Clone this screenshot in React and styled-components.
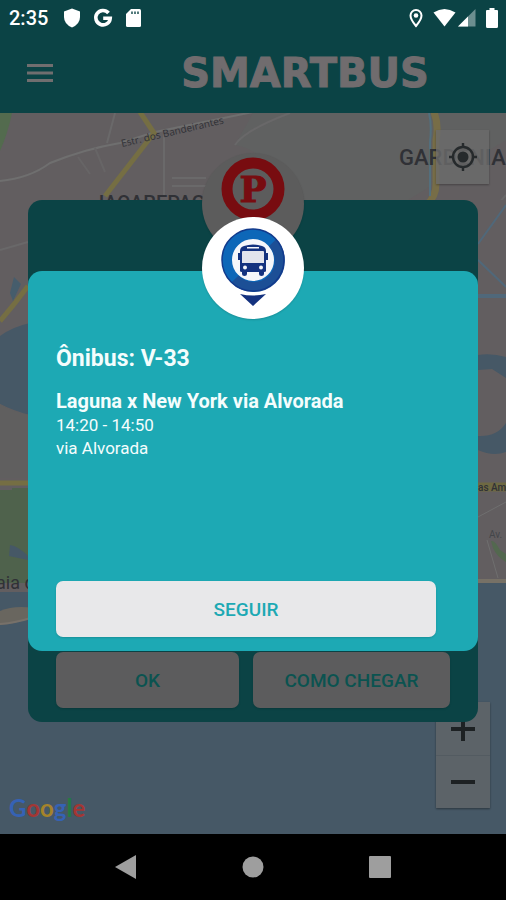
import React from "react";
import styled, { createGlobalStyle } from "styled-components";

const GlobalStyle = createGlobalStyle`
  *, *::before, *::after { box-sizing: border-box; }
  body { margin: 0; background: #000; font-family: Roboto, "Liberation Sans", sans-serif; }
  button { font: inherit; border: 0; padding: 0; cursor: pointer; }
  svg { display: block; }
`;

const Screen = styled.div`
  display: flex;
  flex-direction: column;
  min-height: 100vh;
`;

const TopArea = styled.header`
  background: #0b4345;
`;

const StatusBar = styled.div`
  display: flex;
  align-items: center;
  justify-content: space-between;
  height: 36px;
  padding: 0 8px 0 9px;
  color: #fff;
`;

const StatusGroup = styled.div`
  display: flex;
  align-items: center;
  gap: ${(p) => p.$gap}px;
`;

const Clock = styled.time`
  font-size: 20px;
  font-weight: 500;
  line-height: 36px;
  margin-right: 3px;
`;

const Toolbar = styled.div`
  display: flex;
  align-items: center;
  height: 77px;
  padding: 0 48px 4px 26px;
`;

const MenuButton = styled.button`
  background: none;
  color: #706e6f;
`;

const Brand = styled.h1`
  flex: 1;
  margin: 0 0 0 98px;
  text-align: center;
  font-family: "DejaVu Sans", sans-serif;
  font-size: 40px;
  font-weight: 700;
  line-height: 40px;
  color: #706c6e;
  -webkit-text-stroke: 1px #706c6e;
`;

const MapArea = styled.main`
  position: relative;
  flex: 1;
  min-height: 640px;
  background: #465866;
`;

const MapDrawing = styled.svg`
  position: absolute;
  inset: 0;
  width: 100%;
  height: 100%;
`;

const LocateButton = styled.button`
  position: absolute;
  top: 17px;
  right: 17px;
  display: grid;
  place-items: center;
  width: 53px;
  height: 54px;
  background: rgba(108, 107, 108, 0.8);
  color: #262a2c;
  box-shadow: 0 1px 2px rgba(0, 0, 0, 0.3);
`;

const ZoomControls = styled.div`
  position: absolute;
  right: 16px;
  bottom: 26px;
  width: 54px;
  background: #5c6368;
  box-shadow: 0 1px 2px rgba(0, 0, 0, 0.4);
`;

const ZoomButton = styled.button`
  display: grid;
  place-items: center;
  width: 100%;
  height: 53px;
  background: none;
  color: #1d2123;

  & + & { border-top: 1px solid #535b61; }
`;

const MapCredit = styled.a`
  position: absolute;
  left: 9px;
  bottom: 11px;
  font-family: Lato, sans-serif;
  font-size: 24px;
  line-height: 30px;
  font-weight: 700;
  text-decoration: none;
`;

const Letter = styled.span`
  color: ${(p) => p.$color};
`;

const Overlay = styled.div`
  position: absolute;
  inset: 0;
  display: grid;
  align-items: center;
  padding: 0 28px 25px;
`;

const Card = styled.section`
  grid-area: 1 / 1;
  position: relative;
  display: flex;
  flex-direction: column;
  justify-content: flex-end;
  border-radius: 14px;
`;

const ParkingCard = styled(Card)`
  min-height: 522px;
  padding: 28px 28px 14px;
  background: #0b4345;
`;

const BusCard = styled(Card)`
  min-height: 380px;
  padding: 72px 42px 14px 28px;
  background: #1da9b4;
  color: #f4fdfd;
`;

const Badge = styled.div`
  position: absolute;
  top: ${(p) => p.$top}px;
  left: 50%;
  width: 102px;
  height: 102px;
  margin-left: -51px;
  border-radius: 50%;
  background: ${(p) => p.$color};
  box-shadow: 0 1px 2px rgba(0, 0, 0, 0.15);
`;

const Details = styled.div`
  flex: 1;
`;

const BusTitle = styled.h2`
  margin: 0 0 13px;
  font-size: 23px;
  line-height: 32px;
  font-weight: 700;
`;

const RouteName = styled.h3`
  margin: 0;
  font-size: 20px;
  line-height: 26px;
  font-weight: 700;
`;

const RouteLine = styled.p`
  margin: 0;
  font-size: 17px;
  line-height: 23px;
`;

const Actions = styled.div`
  display: grid;
  grid-template-columns: 13fr 14fr;
  gap: 14px;
`;

const ActionButton = styled.button`
  height: 56px;
  border-radius: 7px;
  font-size: 19px;
  font-weight: 500;
  background: ${(p) => (p.$dim ? "#5c5c5d" : "#e8e8ea")};
  color: ${(p) => (p.$dim ? "#0b5350" : "#1da9b4")};
  box-shadow: 0 1px 2px rgba(0, 0, 0, 0.15);
`;

const NavBar = styled.nav`
  display: grid;
  grid-template-columns: repeat(3, 127px);
  justify-content: center;
  height: 66px;
  background: #000;
`;

const NavButton = styled.button`
  display: grid;
  place-items: center;
  background: none;
  color: #9e9e9e;
`;

const MapPicture = () => (
  <MapDrawing viewBox="0 113 506 721" preserveAspectRatio="xMidYMid slice" aria-hidden="true">
    <rect y="113" width="506" height="721" fill="#625e60" />
    <path d="M253 113H506V140L400 205H290Q270 150 235 145Z" fill="#606161" />
    <path d="M0 113H12Q8 133 0 151Z" fill="#536b4e" />
    <g fill="none" stroke="#6f6f6f" strokeWidth="2">
      <path d="M0 181Q30 178 50 163Q85 149 120 143L155 132L253 112" />
      <path d="M164 134V196M172 178H206M172 186H206M115 113L107 143" stroke="#6a696a" />
      <path d="M78 157L90 174M95 148L105 172" stroke="#676566" />
      <path d="M235 145Q245 130 290 113M0 250L28 242M480 225L506 195" stroke="#696869" />
    </g>
    <g fill="none" stroke="#756e43" strokeWidth="5">
      <path d="M140 112L154 133L105 196" />
      <path d="M434 112Q439 125 436 140V180Q437 197 426 205" stroke="#776d47" strokeWidth="7" />
      <path d="M0 321Q14 305 28 286" />
      <path d="M0 483H30" />
    </g>
    <path d="M429 113Q432 125 430 142V196" fill="none" stroke="#536f7d" strokeWidth="2" />
    <path d="M14 277L21 284L13 301L10 293Z" fill="#465d6c" />
    <path d="M0 336Q12 327 30 323V415Q14 411 0 404Z" fill="#465866" />
    <path d="M0 404Q15 413 30 415V478H0Z" fill="#605f5f" />
    <path d="M0 490H12V488H30V583H0Z" fill="#4f624c" />
    <path d="M10 545Q18 546 28 556V560L9 556Z" fill="#465866" />
    <path d="M0 592H30V609Q15 606 0 612Z" fill="#465866" />
    <path d="M0 611Q14 605 34 608V618Q15 624 0 625Z" fill="#69665f" />
    <path d="M0 625Q15 624 34 617V582H506V834H0Z" fill="#465866" />
    <path d="M0 624Q15 623 34 617" fill="none" stroke="#77716a" strokeWidth="2" />
    <path d="M470 582V200H506V582Z" fill="#625e60" />
    <g fill="none" stroke="#50687a" strokeWidth="2">
      <path d="M478 244L506 205M478 260L506 287" />
      <path d="M478 296H506" strokeWidth="4" />
    </g>
    <path d="M478 355Q492 353 506 357V378L492 369L478 370ZM478 436Q497 437 506 423V452Q493 457 478 450Z" fill="#465866" />
    <path d="M478 487H506" stroke="#6e6942" strokeWidth="9" />
    <path d="M491 541Q495 540 500 550L506 554V562Q497 557 493 548Z" fill="#53684f" />
    <path d="M478 581H506" stroke="#777166" strokeWidth="4" />
    <path d="M487 540L498 578M478 517L506 502" stroke="#6f6f6f" strokeWidth="1" />
    <g fontFamily="Roboto, sans-serif" fill="#303136">
      <text x="122" y="147" fontSize="10" transform="rotate(-13 122 147)" fontFamily="Open Sans, sans-serif">Estr. dos Bandeirantes</text>
      <text x="93" y="210" fontSize="20" fontWeight="500">JACAREPAGUÁ</text>
      <text x="399" y="165" fontSize="22" fontWeight="500">GARDÊNIA</text>
      <text x="-4" y="589" fontSize="18">aia do</text>
      <text x="478" y="491" fontSize="10" fontWeight="500">as Am</text>
      <text x="489" y="538" fontSize="10" fill="#44464a">Av.</text>
    </g>
  </MapDrawing>
);

const MenuIcon = () => (
  <svg width="28" height="20" viewBox="0 0 28 20" fill="currentColor" aria-hidden="true">
    <path d="M1 1H27V4H1ZM1 8.500H27V11.500H1ZM1 16H27V19H1Z" />
  </svg>
);

const ShieldIcon = () => (
  <svg width="18" height="20" viewBox="0 0 18 20" fill="currentColor" aria-hidden="true">
    <path d="M9 .5L17 3.500V9Q17 16 9 19.500Q1 16 1 9V3.500Z" />
  </svg>
);

const GoogleGIcon = () => (
  <svg width="20" height="20" viewBox="0 0 20 20" fill="none" stroke="currentColor" strokeWidth="3.600" aria-hidden="true">
    <path d="M15.500 5A7.200 7.200 0 1 0 17.200 10.300H10.200" />
  </svg>
);

const SdCardIcon = () => (
  <svg width="17" height="20" viewBox="0 0 17 20" aria-hidden="true">
    <path d="M6 1H14.500Q16 1 16 2.500V17.500Q16 19 14.500 19H2.500Q1 19 1 17.500V6Z" fill="currentColor" />
    <path d="M7 3.500V6M10 3.500V6M13 3.500V6" stroke="#0b4345" strokeWidth="1.400" />
  </svg>
);

const LocationIcon = () => (
  <svg width="16" height="20" viewBox="0 0 16 20" aria-hidden="true">
    <path d="M8 2A5.500 5.500 0 0 0 2.500 7.500C2.500 11.500 8 18 8 18S13.500 11.500 13.500 7.500A5.500 5.500 0 0 0 8 2Z" fill="none" stroke="currentColor" strokeWidth="2" />
    <circle cx="8" cy="7.500" r="2.300" fill="currentColor" />
  </svg>
);

const WifiIcon = () => (
  <svg width="23" height="20" viewBox="0 0 23 20" fill="currentColor" aria-hidden="true">
    <path d="M.5 4.500Q11.500-2.500 22.500 4.500L11.500 18.500Z" />
  </svg>
);

const SignalIcon = () => (
  <svg width="18" height="20" viewBox="0 0 18 20" fill="currentColor" aria-hidden="true">
    <path d="M0 18.500L17.500 1V18.500Z" opacity=".4" />
    <path d="M0 18.500L10 8.500V18.500Z" />
  </svg>
);

const BatteryIcon = () => (
  <svg width="12" height="20" viewBox="0 0 12 20" fill="currentColor" aria-hidden="true">
    <path d="M3.500 0H8.500V2H11Q12 2 12 3V18.500Q12 20 10.500 20H1.500Q0 20 0 18.500V3Q0 2 1 2H3.500Z" />
  </svg>
);

const LocateIcon = () => (
  <svg width="30" height="30" viewBox="0 0 30 30" fill="none" stroke="currentColor" strokeWidth="2.400" aria-hidden="true">
    <circle cx="15" cy="15" r="10" />
    <circle cx="15" cy="15" r="5.500" fill="currentColor" stroke="none" />
    <path d="M15 1V5M15 25V29M1 15H5M25 15H29" />
  </svg>
);

const PlusIcon = () => (
  <svg width="24" height="24" viewBox="0 0 24 24" fill="currentColor" aria-hidden="true">
    <path d="M10 0H14V10H24V14H14V24H10V14H0V10H10Z" />
  </svg>
);

const MinusIcon = () => (
  <svg width="24" height="24" viewBox="0 0 24 24" fill="currentColor" aria-hidden="true">
    <path d="M0 10H24V14H0Z" />
  </svg>
);

const ParkingPin = () => (
  <svg width="102" height="102" viewBox="0 0 102 102" aria-hidden="true">
    <circle cx="51" cy="36" r="26" fill="#5c5c5c" stroke="#780c10" strokeWidth="11" />
    <text x="51" y="49" textAnchor="middle" fontFamily="DejaVu Serif, serif" fontWeight="700" fontSize="36" fill="#780c10" stroke="#780c10">P</text>
  </svg>
);

const BusPin = () => (
  <svg width="102" height="102" viewBox="0 0 102 102" aria-hidden="true">
    <circle cx="51" cy="43" r="26" fill="#f5f6fa" stroke="#0d67b8" strokeWidth="10" />
    <path d="M70.500 25.800A26 26 0 0 1 33 62" fill="none" stroke="#1c4f96" strokeWidth="10" />
    <circle cx="51" cy="43" r="31" fill="none" stroke="#123a8c" strokeWidth="1.500" />
    <path d="M38 77Q51 80 64 77L51 89Z" fill="#14327f" />
    <g fill="#14327f">
      <path d="M42 29Q51 26 60 29Q64 30 64 34V36H66V43H64V54Q64 55 62 55V57Q62 59 59.500 59Q57 59 57 57V55H45V57Q45 59 42.500 59Q40 59 40 57V55Q38 55 38 54V43H36V36H38V34Q38 30 42 29Z" />
      <path d="M45 30H57V31.500H45Z" fill="#f5f6fa" />
      <path d="M41 34H61Q62 34 62 35V46H40V35Q40 34 41 34Z" fill="#e2e4ec" />
      <circle cx="43" cy="50.500" r="2" fill="#f5f6fa" />
      <circle cx="59" cy="50.500" r="2" fill="#f5f6fa" />
    </g>
  </svg>
);

const creditLetters = [
  ["G", "#3562b4"],
  ["o", "#a33634"],
  ["o", "#a5832a"],
  ["g", "#3562b4"],
  ["l", "#247a43"],
  ["e", "#a33634"],
];

export default function App() {
  return (
    <Screen>
      <GlobalStyle />
      <TopArea>
        <StatusBar>
          <StatusGroup $gap={12}>
            <Clock>2:35</Clock>
            <ShieldIcon />
            <GoogleGIcon />
            <SdCardIcon />
          </StatusGroup>
          <StatusGroup $gap={9}>
            <LocationIcon />
            <StatusGroup $gap={10}>
              <StatusGroup $gap={2}>
                <WifiIcon />
                <SignalIcon />
              </StatusGroup>
              <BatteryIcon />
            </StatusGroup>
          </StatusGroup>
        </StatusBar>
        <Toolbar>
          <MenuButton type="button" aria-label="Menu"><MenuIcon /></MenuButton>
          <Brand>SMARTBUS</Brand>
        </Toolbar>
      </TopArea>

      <MapArea>
        <MapPicture />
        <LocateButton type="button" aria-label="Minha localização"><LocateIcon /></LocateButton>
        <ZoomControls>
          <ZoomButton type="button" aria-label="Aumentar zoom"><PlusIcon /></ZoomButton>
          <ZoomButton type="button" aria-label="Diminuir zoom"><MinusIcon /></ZoomButton>
        </ZoomControls>
        <MapCredit href="#google" aria-label="Google">
          {creditLetters.map(([char, color], i) => (
            <Letter key={i} $color={color}>{char}</Letter>
          ))}
        </MapCredit>

        <Overlay>
          <ParkingCard>
            <Badge $top={-47} $color="#5c5c5c"><ParkingPin /></Badge>
            <Actions>
              <ActionButton type="button" $dim>OK</ActionButton>
              <ActionButton type="button" $dim>COMO CHEGAR</ActionButton>
            </Actions>
          </ParkingCard>
          <BusCard role="dialog" aria-labelledby="bus-title">
            <Badge $top={-54} $color="#fff"><BusPin /></Badge>
            <Details>
              <BusTitle id="bus-title">Ônibus: V-33</BusTitle>
              <RouteName>Laguna x New York via Alvorada</RouteName>
              <RouteLine>14:20 - 14:50</RouteLine>
              <RouteLine>via Alvorada</RouteLine>
            </Details>
            <ActionButton type="button">SEGUIR</ActionButton>
          </BusCard>
        </Overlay>
      </MapArea>

      <NavBar aria-label="Sistema">
        <NavButton type="button" aria-label="Voltar">
          <svg width="22" height="24" viewBox="0 0 22 24" fill="currentColor"><path d="M21 0V24L0 12Z" /></svg>
        </NavButton>
        <NavButton type="button" aria-label="Início">
          <svg width="22" height="22" viewBox="0 0 22 22" fill="currentColor"><circle cx="11" cy="11" r="10.500" /></svg>
        </NavButton>
        <NavButton type="button" aria-label="Recentes">
          <svg width="22" height="22" viewBox="0 0 22 22" fill="currentColor"><rect width="22" height="22" rx="1" /></svg>
        </NavButton>
      </NavBar>
    </Screen>
  );
}
